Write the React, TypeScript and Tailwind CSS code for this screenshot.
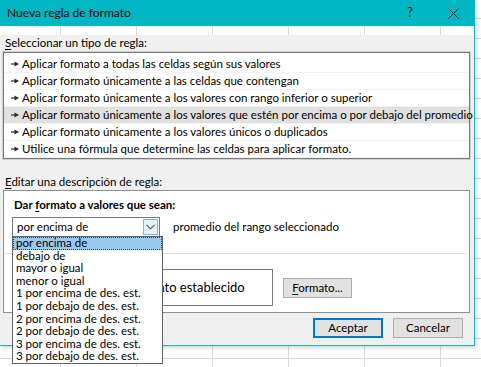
const ruleTypes = [
  "Aplicar formato a todas las celdas según sus valores",
  "Aplicar formato únicamente a las celdas que contengan",
  "Aplicar formato únicamente a los valores con rango inferior o superior",
  "Aplicar formato únicamente a los valores que estén por encima o por debajo del promedio",
  "Aplicar formato únicamente a los valores únicos o duplicados",
  "Utilice una fórmula que determine las celdas para aplicar formato.",
];

const options = [
  "por encima de",
  "debajo de",
  "mayor o igual",
  "menor o igual",
  "1 por encima de des. est.",
  "1 por debajo de des. est.",
  "2 por encima de des. est.",
  "2 por debajo de des. est.",
  "3 por encima de des. est.",
  "3 por debajo de des. est.",
];

function RuleArrow() {
  return (
    <svg width="8" height="6" viewBox="0 0 8 6" className="shrink-0">
      <path d="M0 3h4" stroke="#2b2b2b" strokeWidth="1.2" />
      <path d="M3.5 0.5L8 3L3.5 5.5Z" fill="#2b2b2b" />
    </svg>
  );
}

function Chevron() {
  return (
    <svg width="9" height="6" viewBox="0 0 9 6">
      <path d="M0.5 0.8L4.5 4.8L8.5 0.8" fill="none" stroke="#555" strokeWidth="1.1" />
    </svg>
  );
}

export default function App() {
  return (
    <div className="w-[481px] h-[367px] overflow-hidden bg-white bg-[linear-gradient(#dadada_1px,transparent_1px),linear-gradient(90deg,#dadada_1px,transparent_1px)] bg-size-[76px_20px] bg-position-[60px_18px] font-['Lato',sans-serif] text-[11.5px] text-black">
      <div className="w-[475px] border-r border-b border-[#19b3c0] shadow-[1px_1px_5px_rgba(0,0,0,0.22)]">
        {/* Title bar */}
        <div className="h-[26px] bg-[#00b7c3] flex items-center">
          <span className="pl-[7px] text-[12px] flex-1">Nueva regla de formato</span>
          <span className="w-[46px] text-center text-[13px]">?</span>
          <span className="w-[41px] flex justify-center">
            <svg width="11" height="11" viewBox="0 0 11 11">
              <path d="M0.5 0.5L10.5 10.5M10.5 0.5L0.5 10.5" stroke="#1a1a1a" strokeWidth="1" />
            </svg>
          </span>
        </div>

        {/* Body */}
        <div className="bg-[#f0f0f0] pl-[3px] pr-[4px] pb-[7px]">
          <div className="mt-[9px] pl-[2px] leading-[16px]">
            <span className="underline underline-offset-2">S</span>eleccionar un tipo de regla:
          </div>

          <div className="mt-[1px] bg-white border border-[#7a7a7a] shadow-[0_0_0_1px_#cfcfcf] pt-[3px]">
            {ruleTypes.map((r, i) => (
              <div
                key={r}
                className={`h-[17px] flex items-center gap-[3px] pl-[7px] whitespace-nowrap border-b border-[#f2f2f2] ${
                  i === 3 ? "bg-[#e0e0e0]" : ""
                }`}
              >
                <RuleArrow />
                <span>{r}</span>
              </div>
            ))}
          </div>

          <div className="mt-[15px] pl-[2px] leading-[16px]">
            <span className="underline underline-offset-2">E</span>ditar una descripción de regla:
          </div>

          <div className="bg-white border border-[#8f8f8f] pl-[8px] pr-[2px] pt-[6px] pb-[6px]">
            <div className="ml-[2px] leading-[16px] font-bold">
              Dar <span className="underline underline-offset-2">f</span>ormato a valores que sean:
            </div>

            <div className="mt-[4px] flex items-center">
              <div className="relative w-[148px] h-[20px] border border-[#7a7a7a] bg-white flex items-center">
                <span className="pl-[4px] flex-1">por encima de</span>
                <span className="w-[15px] h-[16px] mr-[1px] border border-[#7eb4ea] bg-[#e5f1fb] flex items-center justify-center">
                  <Chevron />
                </span>

                {/* Open dropdown list */}
                <div className="absolute z-10 top-[18px] -left-[1px] w-[151px] bg-white border border-[#646464]">
                  {options.map((o, i) => (
                    <div
                      key={o}
                      className={`h-[12.6px] leading-[12.6px] pl-[3px] whitespace-nowrap ${
                        i === 0 ? "bg-[#99c9ef] outline-1 outline-dotted outline-[#3a3a3a] -outline-offset-1" : ""
                      }`}
                    >
                      {o}
                    </div>
                  ))}
                </div>
              </div>
              <span className="ml-[13px]">promedio del rango seleccionado</span>
            </div>

            <div className="mt-[16px] -ml-[7px] border-t border-[#e3e3e3]" />

            {/* Preview row (its label sits under the open list) */}
            <div className="mt-[15px] flex items-center">
              <div className="w-[70px]" />
              <div className="w-[191px] h-[37px] border border-[#7a7a7a] flex items-center justify-center text-[13px]">
                Sin formato establecido
              </div>
              <button className="ml-[10px] w-[69px] h-[20px] bg-[#e1e1e1] border border-[#adadad] leading-none">
                <span className="underline underline-offset-2">F</span>ormato...
              </button>
            </div>
          </div>

          <div className="mt-[5px] pr-[7px] flex justify-end gap-[10px]">
            <button className="w-[70px] h-[20px] bg-[#e1e1e1] border border-[#0078d7] shadow-[inset_0_0_0_1px_#0078d7] leading-none">
              Aceptar
            </button>
            <button className="w-[70px] h-[20px] bg-[#e1e1e1] border border-[#adadad] leading-none">
              Cancelar
            </button>
          </div>
        </div>
      </div>
    </div>
  );
}
